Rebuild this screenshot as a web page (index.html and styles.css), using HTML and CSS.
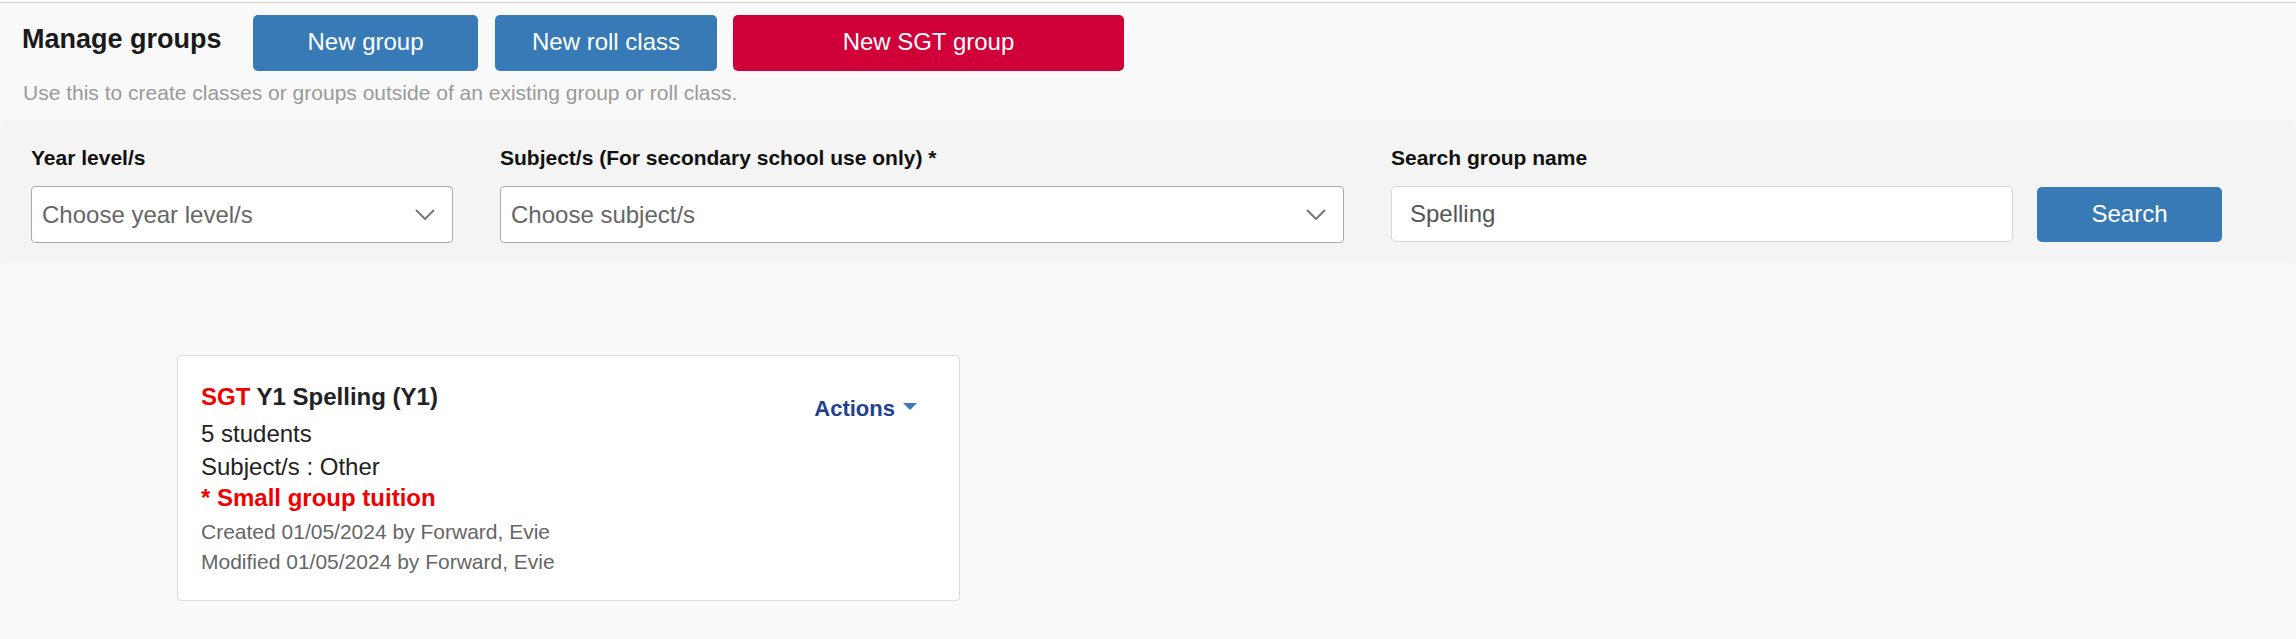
FILE: index.html
```html
<!DOCTYPE html>
<html lang="en">
<head>
<meta charset="utf-8">
<title>Manage groups</title>
<link rel="stylesheet" href="styles.css">
</head>
<body>
<div class="topstrip"></div>
<div class="page">
  <header class="header">
    <h1 class="title">Manage groups</h1>
    <button class="btn btn-blue btn-group">New group</button>
    <button class="btn btn-blue btn-roll">New roll class</button>
    <button class="btn btn-red btn-sgt">New SGT group</button>
  </header>
  <p class="subtext">Use this to create classes or groups outside of an existing group or roll class.</p>

  <section class="filters">
    <div class="field field-year">
      <label class="label">Year level/s</label>
      <div class="select">
        <span class="placeholder">Choose year level/s</span>
        <svg class="chev" width="20" height="11" viewBox="0 0 20 11"><path d="M1 1 L10 10 L19 1" fill="none" stroke="#777" stroke-width="2"/></svg>
      </div>
    </div>
    <div class="field field-subject">
      <label class="label">Subject/s (For secondary school use only) *</label>
      <div class="select">
        <span class="placeholder">Choose subject/s</span>
        <svg class="chev" width="20" height="11" viewBox="0 0 20 11"><path d="M1 1 L10 10 L19 1" fill="none" stroke="#777" stroke-width="2"/></svg>
      </div>
    </div>
    <div class="field field-search">
      <label class="label">Search group name</label>
      <div class="search-row">
        <div class="input">Spelling</div>
        <button class="btn btn-blue btn-search">Search</button>
      </div>
    </div>
  </section>

  <main class="results">
    <div class="card">
      <div class="card-body">
        <div class="card-title"><span class="red">SGT</span> Y1 Spelling (Y1)</div>
        <div class="line line-students">5 students</div>
        <div class="line line-subject">Subject/s : Other</div>
        <div class="line sgt-note">* Small group tuition</div>
        <div class="meta meta-created">Created 01/05/2024 by Forward, Evie</div>
        <div class="meta">Modified 01/05/2024 by Forward, Evie</div>
      </div>
      <div class="actions">
        <span class="actions-text">Actions</span>
        <span class="caret"></span>
      </div>
    </div>
  </main>
</div>
</body>
</html>
```

FILE: styles.css
```css
html, body {
  margin: 0;
  padding: 0;
}
body {
  background: #f9f9f9;
  font-family: "Liberation Sans", Arial, sans-serif;
  color: #222;
  width: 2296px;
}
.topstrip {
  height: 2px;
  background: #fdfdfd;
}
.page {
  border-top: 1px solid #cccccc;
}
.header {
  display: flex;
  align-items: flex-start;
  padding: 12px 0 0 22px;
}
.title {
  margin: 0;
  font-size: 27px;
  font-weight: bold;
  line-height: 48px;
  color: #1a1a1a;
  width: 231px;
}
.btn {
  border: 0;
  border-radius: 5px;
  color: #fff;
  font-family: "Liberation Sans", Arial, sans-serif;
  font-size: 24px;
  height: 56px;
  line-height: 54px;
  padding: 0 0 2px 0;
  text-align: center;
  cursor: pointer;
}
.btn-blue { background: #377ab6; }
.btn-red { background: #d00038; }
.btn-group { width: 225px; }
.btn-roll { width: 222px; margin-left: 17px; }
.btn-sgt { width: 391px; margin-left: 16px; }

.subtext {
  margin: 7px 0 0 23px;
  font-size: 21px;
  line-height: 30px;
  color: #999;
}

.filters {
  margin-top: 12px;
  background: #f4f4f4;
  border-radius: 4px;
  height: 143px;
  box-sizing: border-box;
  padding: 23px 0 0 31px;
  display: flex;
}
.field {
  display: flex;
  flex-direction: column;
}
.field-year { width: 422px; }
.field-subject { width: 844px; margin-left: 47px; }
.field-search { margin-left: 47px; }
.label {
  font-size: 21px;
  font-weight: bold;
  line-height: 30px;
  color: #111;
  margin-bottom: 13px;
}
.select {
  height: 57px;
  box-sizing: border-box;
  border: 1px solid #a9a9a9;
  border-radius: 4px;
  background: #fff;
  display: flex;
  align-items: center;
  justify-content: space-between;
  padding: 0 17px 0 10px;
}
.placeholder {
  font-size: 24px;
  color: #666;
}
.chev { display: block; }
.search-row {
  display: flex;
}
.input {
  width: 622px;
  height: 56px;
  box-sizing: border-box;
  border: 1px solid #d2d7de;
  border-radius: 5px;
  background: #fff;
  font-size: 24px;
  color: #555;
  line-height: 54px;
  padding-left: 18px;
}
.btn-search {
  width: 185px;
  margin-left: 24px;
  height: 55px;
  line-height: 53px;
  margin-top: 1px;
}

.results {
  padding: 92px 0 0 177px;
}
.card {
  width: 783px;
  height: 246px;
  box-sizing: border-box;
  border: 1px solid #dcdcdc;
  border-radius: 4px;
  background: #fff;
  padding: 26px 42px 0 23px;
  display: flex;
  justify-content: space-between;
  align-items: flex-start;
}
.card-title {
  font-size: 24px;
  font-weight: bold;
  line-height: 30px;
  color: #222;
}
.red { color: #f00000; }
.line {
  font-size: 24px;
  line-height: 30px;
  color: #222;
}
.line-students { margin-top: 7px; }
.line-subject { margin-top: 3px; }
.sgt-note {
  margin-top: 1px;
  color: #f00000;
  font-weight: bold;
}
.meta {
  font-size: 21px;
  line-height: 30px;
  color: #666;
}
.meta-created { margin-top: 4px; }

.actions {
  margin-top: 12px;
  display: flex;
  align-items: flex-start;
}
.actions-text {
  font-size: 22px;
  font-weight: bold;
  line-height: 30px;
  color: #23408e;
}
.caret {
  margin: 9px 0 0 8px;
  width: 0;
  height: 0;
  border-left: 7px solid transparent;
  border-right: 7px solid transparent;
  border-top: 7px solid #3a7bc0;
}
```
